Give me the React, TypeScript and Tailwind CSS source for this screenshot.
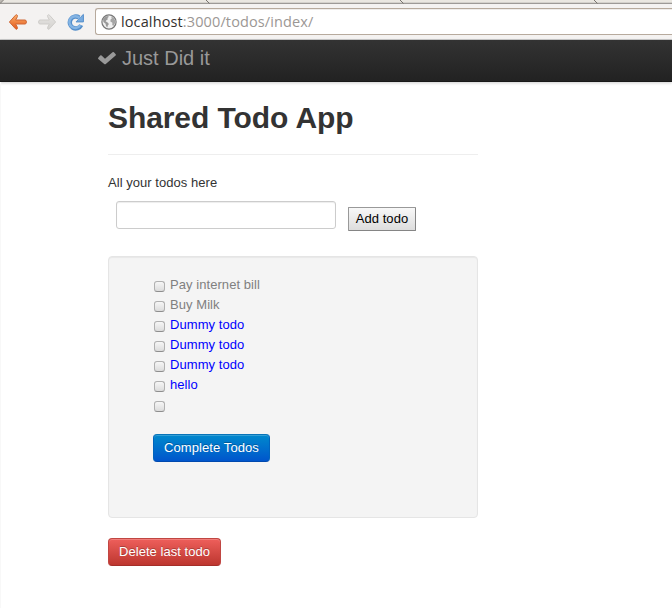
import React from 'react';

const todos = [
  { text: 'Pay internet bill', done: true },
  { text: 'Buy Milk', done: true },
  { text: 'Dummy todo', done: false },
  { text: 'Dummy todo', done: false },
  { text: 'Dummy todo', done: false },
  { text: 'hello', done: false },
  { text: '', done: false },
];

function TabStrip() {
  return (
    <svg className="block h-1 w-full shrink-0" viewBox="0 0 672 4" shapeRendering="auto">
      <rect width="672" height="4" fill="#eae7e1" />
      <rect y="2" width="672" height="1" fill="#d4d1cc" />
      <rect y="3" width="672" height="1" fill="#9d9a97" />
      <path d="M0 0h3L0 3z" fill="#bdb9b3" />
      <path d="M3.5 0 0 3.5M206 0l3.5 3.5M400 0l3.5 3.5M594 0l3.5 3.5" stroke="#77736e" fill="none" />
    </svg>
  );
}

function Arrow({ forward = false }: { forward?: boolean }) {
  const id = forward ? 'fwd' : 'back';
  return (
    <svg width="20" height="18" viewBox="0 0 20 18" className={forward ? '-scale-x-100' : ''}>
      <defs>
        <linearGradient id={id} x1="0" y1="0" x2="0" y2="1">
          <stop offset="0" stopColor={forward ? '#e6e4e2' : '#fbb06a'} />
          <stop offset="1" stopColor={forward ? '#d5d3d0' : '#e4581c'} />
        </linearGradient>
      </defs>
      <path
        d="M1.4 9 7.4 2.3Q9 1 9.4 2.4q.3 1.2-.7 2.6L7.6 7H17q1.4 0 1.4 2T17 11H7.6l1.1 2q1 1.4.7 2.6-.4 1.4-2 .1z"
        fill={`url(#${id})`}
        stroke={forward ? '#cfcdca' : '#cf6836'}
        strokeWidth="1"
        strokeLinejoin="round"
      />
    </svg>
  );
}

function Reload() {
  return (
    <svg width="18" height="18" viewBox="0 0 18 18">
      <path d="M14.2 12.1A6 6 0 1 1 12.2 4.5" fill="none" stroke="#558fcb" strokeWidth="4.4" />
      <path d="M16.4 1.4V8.9H9l2.5-2.5 2.6-2.8z" fill="#78abdf" stroke="#558fcb" strokeLinejoin="round" />
      <path d="M13.3 12.2A5.9 5.9 0 1 1 12.7 5.2" fill="none" stroke="#84b4e4" strokeWidth="2.4" />
    </svg>
  );
}

function Globe() {
  return (
    <svg width="16" height="16" viewBox="0 0 16 16" className="shrink-0">
      <circle cx="8" cy="8" r="7.1" fill="#f0f0f0" stroke="#777" strokeWidth="1.2" />
      <path d="M2 5 4.4 2.4 7.2 1.9 7.8 3 6.4 4.1 6.9 5.2 5.4 6.2 4.6 7.2 6.6 8.4 7.9 9.9 6.8 11.4 6.3 13.6 5 12 4.6 9.8 2.4 8z" fill="#999" />
      <path d="m10 2.2 2.8 1.8 1.5 2.8-.4 2.8-1.6 2.3-1-1 .1-2.2-2-1.2.1-2 1.3-1z" fill="#a5a5a5" />
    </svg>
  );
}

function BrowserBar() {
  return (
    <div className="h-10 bg-[#f4f2f1]">
      <TabStrip />
      <div className="flex h-9 items-center border-b border-[#c9c9c9]">
        <div className="ml-2 flex w-[87px] shrink-0 items-center">
          <Arrow />
          <div className="ml-[9px]"><Arrow forward /></div>
          <div className="ml-[10px]"><Reload /></div>
        </div>
        <div className="flex h-[27px] flex-1 items-center rounded-l-[3px] border border-r-0 border-[#b7aa9d] bg-white pl-[5px] shadow-[inset_0_1px_0_#efedeb]">
          <Globe />
          <span className="ml-[4px] whitespace-pre font-['Open_Sans','Noto_Sans',sans-serif] text-[14.5px] leading-5 tracking-[0.12px] text-[#9b9794]">
            <span className="text-[#33302e]">localhost</span>:3000/todos/index/
          </span>
        </div>
      </div>
    </div>
  );
}

export default function App() {
  return (
    <div className="h-[608px] w-[672px] overflow-hidden bg-white font-['Liberation_Sans',Arial,sans-serif] text-[13px] leading-[18px] text-[#333]">
      <BrowserBar />
      <header className="flex h-[42px] items-start border-b border-[#181818] bg-linear-to-b from-[#333] to-[#222] pl-[97px] pt-2 shadow-[0_1px_3px_rgba(0,0,0,0.2)]">
        <svg width="20" height="20" viewBox="0 0 20 20" className="mr-[5px]">
          <path
            d="M1.3 9.7 3.2 7.6q.7-.7 1.4 0L8 10.8l7.5-6.6q.7-.6 1.4.1l1.8 2q.6.7-.1 1.3L8.8 16q-.8.7-1.6 0L1.3 11q-.6-.6 0-1.3z"
            fill="#999"
          />
        </svg>
        <span className="text-[20px] leading-5 text-[#999]">Just Did it</span>
      </header>

      <main className="h-[526px] border-l border-[#f8f8f8] pl-[107px] pt-[18px]">
        <div className="w-[370px]">
          <h1 className="text-[30px] font-bold leading-9 tracking-[-0.08px]">Shared Todo App</h1>
          <hr className="mt-[18px] border-t border-[#eee]" />
          <p className="mt-[19px] tracking-[0.04px]">All your todos here</p>
          <form className="mt-[9px] flex pl-2" onSubmit={(e) => e.preventDefault()}>
            <input
              type="text"
              aria-label="New todo"
              className="h-7 w-[220px] rounded-[3px] border border-[#ccc] bg-white px-1 shadow-[inset_0_1px_1px_rgba(0,0,0,0.075)] outline-none"
            />
            <button className="ml-3 mt-[6px] h-6 w-[68px] whitespace-nowrap rounded-[1px] border border-[#999] border-b-[#858585] border-r-[#858585] bg-linear-to-b from-[#f8f8f8] to-[#dddddd] text-[13px] leading-[18px] tracking-[0.04px] text-black">
              Add todo
            </button>
          </form>
          <section className="mt-[25px] h-[262px] rounded-[4px] border border-[#e5e5e5] bg-[#f4f4f4] pl-11 pt-[18px] shadow-[inset_0_1px_1px_rgba(0,0,0,0.05)]">
            <ul>
              {todos.map((todo, i) => (
                <li key={i} className="flex h-5 items-start">
                  <input
                    type="checkbox"
                    aria-label={todo.text || 'Untitled'}
                    className="ml-[1px] mt-[6px] h-[11px] w-[11px] appearance-none rounded-[3px] border border-[#b0b0b0] border-b-[#8e8e8e] bg-linear-to-b from-[#f6f6f6] to-[#dcdcdc]"
                  />
                  <span className={`ml-[5px] mt-px tracking-[0.06px] ${todo.done ? 'text-[#808080]' : 'text-[#0000ff]'}`}>{todo.text}</span>
                </li>
              ))}
            </ul>
            <button className="mt-[19px] h-7 w-[117px] whitespace-nowrap rounded-[4px] border border-[#0064bd] border-b-[#0049ae] border-t-[#0874b8] bg-linear-to-b from-[#0088cc] to-[#0055cc] text-[13px] leading-[18px] tracking-[0.08px] text-white shadow-[inset_0_1px_0_rgba(255,255,255,0.2)] [text-shadow:0_-1px_0_rgba(0,0,0,0.25)]">
              Complete Todos
            </button>
          </section>
          <button className="mt-5 h-7 w-[113px] whitespace-nowrap rounded-[4px] border border-[#c04642] border-b-[#a52e29] bg-linear-to-b from-[#ee5f5b] to-[#bd362f] text-[13px] leading-[18px] tracking-[0.04px] text-white shadow-[inset_0_1px_0_rgba(255,255,255,0.2)] [text-shadow:0_-1px_0_rgba(0,0,0,0.25)]">
            Delete last todo
          </button>
        </div>
      </main>
    </div>
  );
}
